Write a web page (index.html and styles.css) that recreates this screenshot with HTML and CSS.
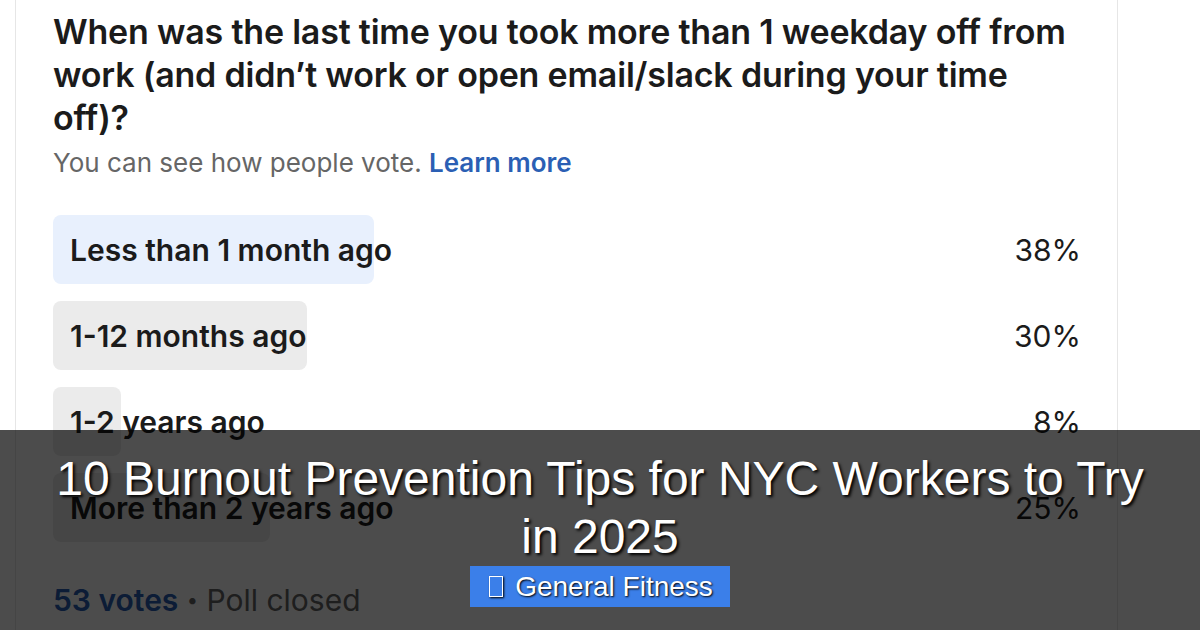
FILE: index.html
```html
<!DOCTYPE html>
<html lang="en">
<head>
    <meta charset="UTF-8">
    <meta name="viewport" content="width=device-width, initial-scale=1.0">
    <title>10 Burnout Prevention Tips for NYC Workers to Try in 2025</title>
    <link rel="stylesheet" href="styles.css">
</head>
<body>

<div class="poll">
    <h1 class="question">When was the last time you took more than 1 weekday off from work (and didn’t work or open email/slack during your time off)?</h1>
    <p class="note">You can see how people vote. <a href="#">Learn more</a></p>

    <!-- Poll results, fill width follows the vote share -->
    <div class="options">
        <div class="option">
            <div class="fill fill-mine" style="width: 321px"></div>
            <span class="label">Less than 1 month ago</span>
            <span class="pct">38%</span>
        </div>
        <div class="option">
            <div class="fill" style="width: 254px"></div>
            <span class="label">1-12 months ago</span>
            <span class="pct">30%</span>
        </div>
        <div class="option">
            <div class="fill" style="width: 68px"></div>
            <span class="label">1-2 years ago</span>
            <span class="pct">8%</span>
        </div>
        <div class="option">
            <div class="fill" style="width: 217px"></div>
            <span class="label">More than 2 years ago</span>
            <span class="pct">25%</span>
        </div>
    </div>

    <p class="votes"><b>53 votes</b> <span class="dot">•</span> Poll closed</p>
</div>

<div class="banner">
    <h2 class="title">10 Burnout Prevention Tips for NYC Workers to Try<br>in 2025</h2>
    <span class="tag"><i class="tag-icon"></i> General Fitness</span>
</div>

</body>
</html>
```

FILE: styles.css
```css
body {
    margin: 0;
    background-color: #fff;
    font-family: Inter, "Noto Sans", sans-serif;
    overflow: hidden;
    height: 630px;
}

.poll {
    margin-left: 15px;
    width: 1028px;
    height: 630px;
    padding: 10px 36px 0 37px;
    border-left: 1px solid #e6e6e6;
    border-right: 1px solid #e6e6e6;
    color: #1b1b1b;
}

.question {
    margin: 0;
    font-size: 34px;
    font-weight: 600;
    line-height: 43px;
    letter-spacing: -0.2px;
}

.note {
    margin: 7px 0 0;
    font-size: 26px;
    line-height: 34px;
    color: #666;
}

.note a {
    color: #2b5fb4;
    font-weight: 600;
    text-decoration: none;
}

.options {
    margin-top: 35px;
    display: flex;
    flex-direction: column;
    gap: 17px;
}

.option {
    position: relative;
    height: 69px;
    display: flex;
    align-items: center;
    justify-content: space-between;
    font-size: 30px;
}

.fill {
    position: absolute;
    left: 0;
    top: 0;
    bottom: 0;
    background-color: #ebebeb;
    border-radius: 8px;
}

.fill-mine {
    background-color: #e8f0fd;
}

.label {
    position: relative;
    padding-left: 17px;
    font-weight: 600;
}

.pct {
    position: relative;
}

.votes {
    margin: 38px 0 0;
    font-size: 30px;
    line-height: 40px;
    color: #666;
}

.votes b {
    color: #2b5fb4;
    font-weight: 600;
}

.dot {
    font-size: 20px;
    vertical-align: 4px;
}

/* dark caption band over the bottom of the screenshot */
.banner {
    position: absolute;
    left: 0;
    right: 0;
    top: 430px;
    bottom: 0;
    background-color: rgba(0, 0, 0, 0.7);
    display: flex;
    flex-direction: column;
    align-items: center;
    padding-top: 20px;
    font-family: "Liberation Sans", Arial, sans-serif;
    color: #fff;
}

.title {
    margin: 0;
    font-size: 48px;
    font-weight: normal;
    line-height: 58px;
    text-align: center;
    text-shadow: 2px 2px 3px #000;
}

.tag {
    display: flex;
    align-items: center;
    gap: 12px;
    height: 41px;
    padding: 0 17px 0 19px;
    background-color: #3b7fe9;
    font-size: 28px;
    text-shadow: 1px 1px 2px #000;
}

.tag-icon {
    width: 12px;
    height: 19px;
    border: 1px solid #fff;
    box-shadow: 1px 1px 2px #000;
}
```
